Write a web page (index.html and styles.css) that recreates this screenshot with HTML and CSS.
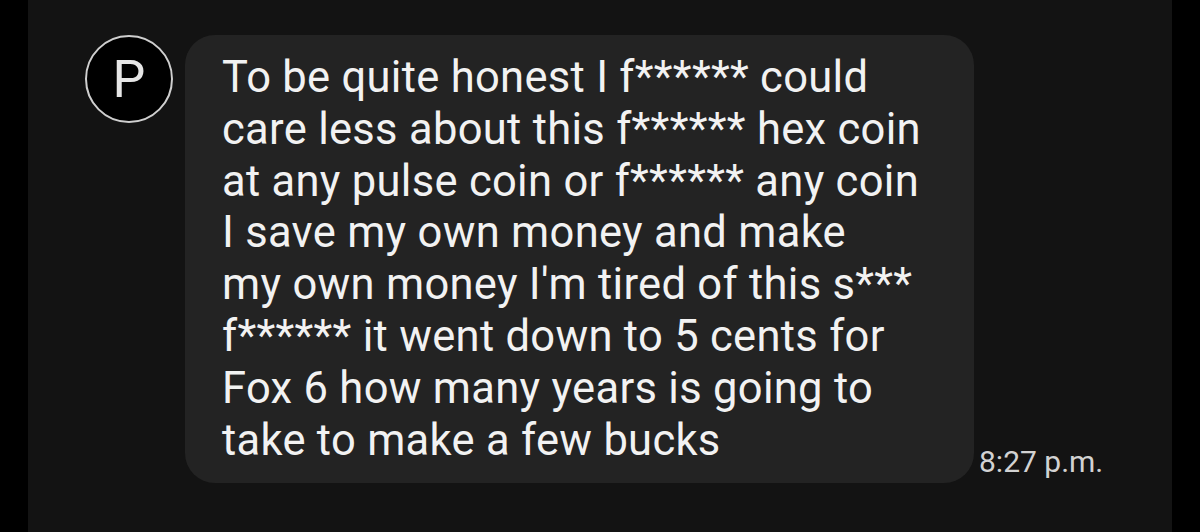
FILE: index.html
```html
<!DOCTYPE html>
<html lang="en">

<head>
    <meta name="viewport" content="width=device-width, initial-scale=1.0">
    <link rel="stylesheet" href="styles.css">
</head>

<body>

    <div class="screen">
        <div class="thread">
            <!-- Incoming message row -->
            <div class="message-row">
                <div class="avatar">P</div>
                <div class="bubble">
                    To be quite honest I f****** could<br>
                    care less about this f****** hex coin<br>
                    at any pulse coin or f****** any coin<br>
                    I save my own money and make<br>
                    my own money I'm tired of this s***<br>
                    f****** it went down to 5 cents for<br>
                    Fox 6 how many years is going to<br>
                    take to make a few bucks
                </div>
                <div class="time">8:27 p.m.</div>
            </div>
        </div>
    </div>

</body>

</html>
```

FILE: styles.css
```css
* {
    box-sizing: border-box;
}

body {
    margin: 0;
    background-color: #000;
    font-family: Roboto, "Noto Sans", sans-serif;
}

/* Black strips on both sides */
.screen {
    height: 532px;
    padding: 0 28px;
    background-color: #000;
}

.thread {
    height: 100%;
    background-color: #131313;
    padding-top: 35px;
    padding-left: 57px;
}

.message-row {
    display: flex;
    align-items: flex-end;
}

.avatar {
    align-self: flex-start;
    width: 88px;
    height: 88px;
    flex-shrink: 0;
    border: 2px solid #cfcfcf;
    border-radius: 50%;
    background-color: #000;
    color: #e6e6e6;
    font-size: 52px;
    display: flex;
    justify-content: center;
    align-items: center;
}

.bubble {
    margin-left: 12px;
    width: 789px;
    height: 448px;
    padding: 17px 0 0 37px;
    background-color: #232323;
    border-radius: 30px;
    color: #f2f2f2;
    font-size: 43.5px;
    letter-spacing: 0.3px;
    line-height: 51.8px;
}

.time {
    margin-left: 5px;
    margin-bottom: 4px;
    color: #d2d2d2;
    font-size: 30px;
}
```
